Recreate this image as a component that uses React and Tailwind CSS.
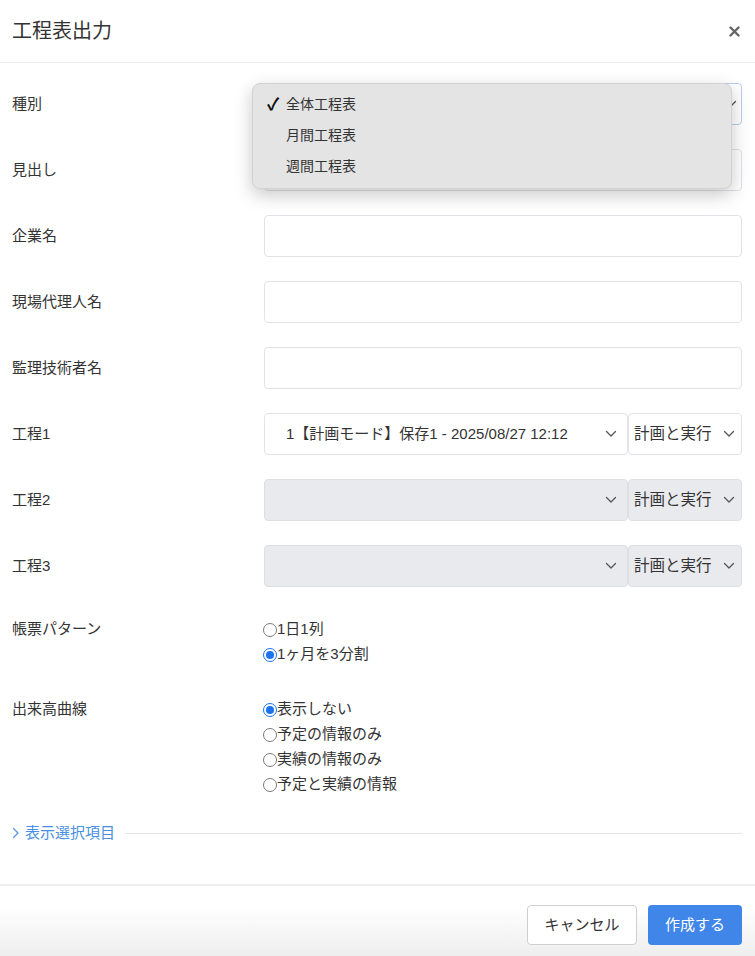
import React from 'react';

const font = { fontFamily: '"Liberation Sans", "Noto Sans CJK JP", "Noto Sans", sans-serif' };

const Chevron = ({ className = '' }) => (
  <svg width="12" height="8" viewBox="0 0 12 8" className={className}>
    <path d="M1.5 1.5 L6 6 L10.5 1.5" fill="none" stroke="#555" strokeWidth="1.3" strokeLinecap="round" strokeLinejoin="round" />
  </svg>
);

const Radio = ({ checked, label }) => (
  <div className="flex items-center h-[25px]">
    {checked ? (
      <span className="w-[14px] h-[14px] rounded-full border-[1.5px] border-[#1a73f0] flex items-center justify-center">
        <span className="w-[8px] h-[8px] rounded-full bg-[#1a73f0]"></span>
      </span>
    ) : (
      <span className="w-[14px] h-[14px] rounded-full border border-[#7a7a7a] bg-white"></span>
    )}
    <span className="text-[15px] text-[#333]">{label}</span>
  </div>
);

const Row = ({ label, children }) => (
  <div className="flex items-center h-[42px]">
    <div className="w-[252px] text-[15px] text-[#333]">{label}</div>
    <div className="flex-1 h-full">{children}</div>
  </div>
);

const TextInput = () => (
  <div className="h-full rounded-[4px] border border-[#e2e2e8] bg-white"></div>
);

const KouteiSelect = ({ value, disabled }) => (
  <div className="flex h-full">
    <div className={`w-[364px] h-full rounded-[4px] border flex items-center pl-[21px] pr-[10px] ${disabled ? 'bg-[#e9eaee] border-[#dedfe4]' : 'bg-white border-[#e2e2e8]'}`}>
      <span className="flex-1 text-[15px] text-[#333] whitespace-nowrap overflow-hidden">{value}</span>
      <Chevron />
    </div>
    <div className={`flex-1 h-full rounded-[4px] border flex items-center pl-[5px] pr-[6px] ${disabled ? 'bg-[#e9eaee] border-[#dedfe4]' : 'bg-white border-[#e2e2e8]'}`}>
      <span className="flex-1 text-[15.5px] text-[#333] whitespace-nowrap">計画と実行</span>
      <Chevron />
    </div>
  </div>
);

export default function App() {
  return (
    <div className="w-[755px] h-[956px] bg-white flex flex-col overflow-hidden" style={font}>
      {/* header */}
      <div className="h-[63px] border-b border-[#eeeeee] flex items-center justify-between pl-[12px] pr-[15px] shrink-0">
        <h1 className="text-[20px] text-[#333]">工程表出力</h1>
        <svg width="11" height="11" viewBox="0 0 11 11">
          <path d="M1.5 1.5 L9.5 9.5 M9.5 1.5 L1.5 9.5" stroke="#666" strokeWidth="2.4" strokeLinecap="round" />
        </svg>
      </div>

      {/* body */}
      <div className="flex-1 pl-[12px] pr-[13px] pt-[20px]">
        <div className="flex flex-col gap-6">
          <Row label="種別">
            <div className="relative h-full">
              <div className="h-full rounded-[4px] border border-[#b9cdf0] bg-white flex items-center justify-end pr-[4px]">
                <Chevron />
              </div>
              <div className="absolute left-[-12px] top-[0px] w-[480px] h-[106px] rounded-[8px] bg-[#e4e4e4] border border-[#d2d2d2] shadow-[0_6px_18px_rgba(0,0,0,0.22)] z-10 py-[5px]">
                <div className="h-[31px] flex items-center pl-[14px]">
                  <span className="w-[19px] text-[17px] font-bold leading-none text-[#111]">✓</span>
                  <span className="text-[14px] text-[#333]">全体工程表</span>
                </div>
                <div className="h-[31px] flex items-center pl-[33px]">
                  <span className="text-[14px] text-[#333]">月間工程表</span>
                </div>
                <div className="h-[31px] flex items-center pl-[33px]">
                  <span className="text-[14px] text-[#333]">週間工程表</span>
                </div>
              </div>
            </div>
          </Row>
          <Row label="見出し"><TextInput /></Row>
          <Row label="企業名"><TextInput /></Row>
          <Row label="現場代理人名"><TextInput /></Row>
          <Row label="監理技術者名"><TextInput /></Row>
          <Row label="工程1"><KouteiSelect value="1【計画モード】保存1 - 2025/08/27 12:12" /></Row>
          <Row label="工程2"><KouteiSelect value="" disabled /></Row>
          <Row label="工程3"><KouteiSelect value="" disabled /></Row>
        </div>

        <div className="flex mt-[30px]">
          <div className="w-[251px] h-[25px] flex items-center text-[15px] text-[#333]">帳票パターン</div>
          <div className="flex flex-col">
            <Radio label="1日1列" />
            <Radio checked label="1ヶ月を3分割" />
          </div>
        </div>

        <div className="flex mt-[30px]">
          <div className="w-[251px] h-[25px] flex items-center text-[15px] text-[#333]">出来高曲線</div>
          <div className="flex flex-col">
            <Radio checked label="表示しない" />
            <Radio label="予定の情報のみ" />
            <Radio label="実績の情報のみ" />
            <Radio label="予定と実績の情報" />
          </div>
        </div>

        <div className="flex items-center mt-[25px] h-[22px]">
          <svg width="8" height="12" viewBox="0 0 8 12" className="mr-[5px]">
            <path d="M1.5 1.5 L6 6 L1.5 10.5" fill="none" stroke="#5b9be6" strokeWidth="1.4" strokeLinecap="round" strokeLinejoin="round" />
          </svg>
          <span className="text-[15px] text-[#4a90e2]">表示選択項目</span>
          <div className="flex-1 h-px bg-[#e6e6e6] ml-[10px]"></div>
        </div>
      </div>

      {/* footer */}
      <div className="h-[72px] shrink-0 border-t-2 border-[#efefef] bg-gradient-to-b from-white from-30% to-[#eeeeee] flex items-start justify-end pt-[19px] pr-[13px] gap-[11px]">
        <button className="h-[40px] w-[110px] rounded-[4px] border border-[#cfcfcf] bg-white text-[15px] text-[#333]">キャンセル</button>
        <button className="h-[40px] w-[94px] rounded-[4px] bg-[#3f86e8] text-[15px] text-white">作成する</button>
      </div>
    </div>
  );
}
